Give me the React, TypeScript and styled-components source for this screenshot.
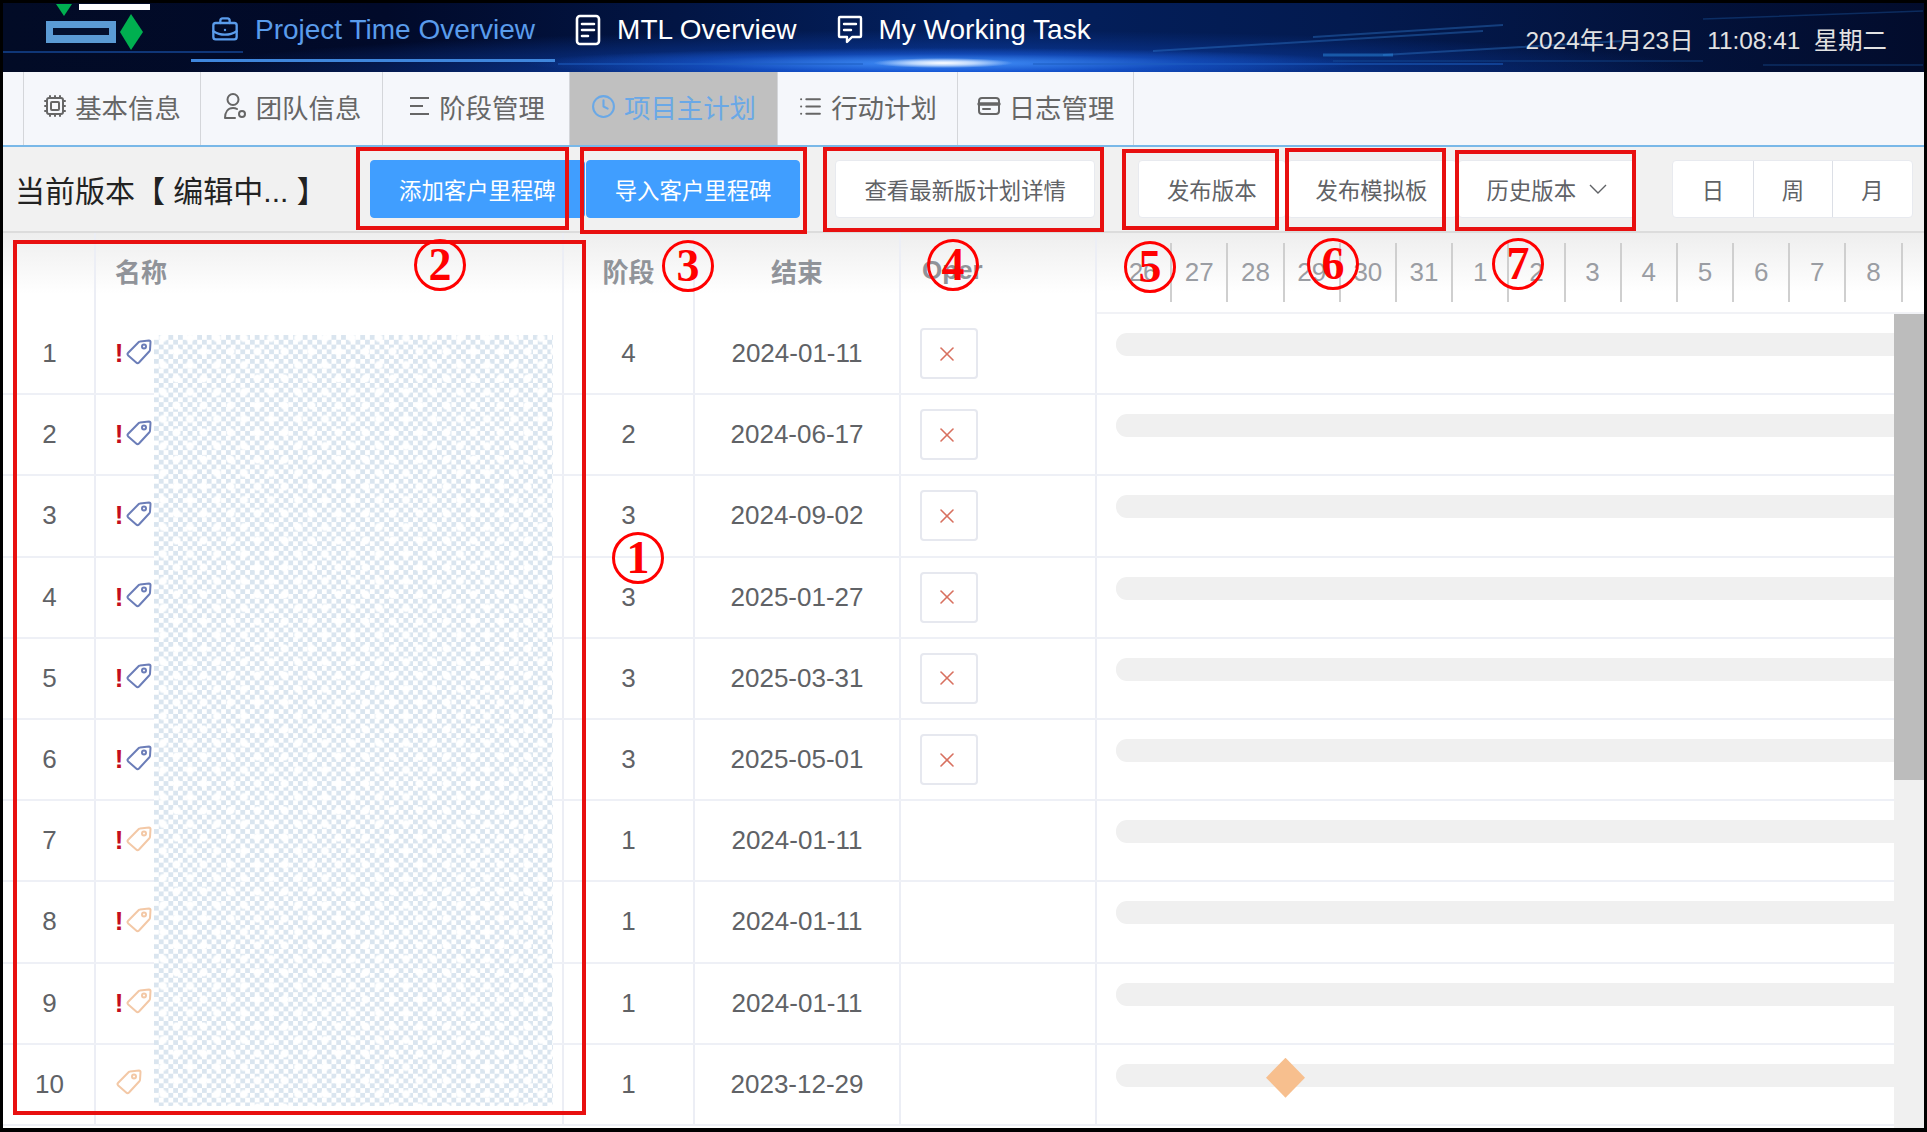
import React from "react";
import styled, {createGlobalStyle} from "styled-components";
import {BriefcaseBusiness, Clock, Cpu, List, X} from "lucide-react";

const GlobalStyle = createGlobalStyle`
  html, body {
    margin: 0;
    padding: 0;
    background: #fff;
  }
  * {
    box-sizing: border-box;
  }
`

const Frame = styled.div`
  position: relative;
  width: 1927px;
  height: 1132px;
  border: 3px solid #000;
  border-bottom-width: 4px;
  overflow: hidden;
  display: flex;
  flex-direction: column;
  background: #fff;
  font-family: "Liberation Sans", "Noto Sans CJK SC", sans-serif;
`

const Header = styled.header`
  position: relative;
  flex: 0 0 69px;
  display: flex;
  align-items: stretch;
  background:
    radial-gradient(ellipse 70px 5px at 940px 60px, #ffffff 0%, rgba(220, 235, 255, .8) 45%, rgba(90, 160, 255, 0) 100%),
    radial-gradient(ellipse 420px 15px at 940px 60px, rgba(70, 150, 255, .95) 0%, rgba(30, 100, 230, .4) 60%, rgba(20, 70, 200, 0) 100%),
    radial-gradient(ellipse 760px 42px at 940px 69px, rgba(16, 80, 210, .95) 0%, rgba(10, 55, 150, .55) 60%, rgba(8, 40, 110, 0) 100%),
    linear-gradient(90deg, #020b26 0%, #010a2a 20%, #03205e 50%, #031a4f 70%, #020c2c 100%);
`

const Streaks = styled.svg`
  position: absolute;
  inset: 0;
  width: 100%;
  height: 100%;
`

const Logo = styled.svg`
  position: relative;
  flex: 0 0 188px;
  height: 69px;
`

const NavItem = styled.div<{$active?: boolean}>`
  position: relative;
  display: flex;
  align-items: center;
  gap: 16px;
  height: 59px;
  padding: 0 20px 2px 20px;
  font-size: 28px;
  color: ${p => p.$active ? "#5a9cec" : "#fff"};
  border-bottom: 3px solid ${p => p.$active ? "#3f86dc" : "transparent"};
  white-space: pre;
`

const DateText = styled.div`
  position: relative;
  margin-left: auto;
  padding: 18px 37px 0 0;
  font-size: 24.4px;
  color: #e2e2e2;
  white-space: pre;
`

const Tabs = styled.nav`
  flex: 0 0 75px;
  display: flex;
  padding-left: 20px;
  background: #f5f7fb;
  border-bottom: 2px solid #79b8e8;
`

const Tab = styled.div<{$active?: boolean; $w: number}>`
  flex: 0 0 ${p => p.$w}px;
  display: flex;
  align-items: center;
  justify-content: center;
  gap: 8px;
  padding-bottom: 5px;
  font-size: 26.4px;
  color: ${p => p.$active ? "#6aa8e6" : "#666"};
  background: ${p => p.$active ? "#c0c0c0" : "transparent"};
  border-left: 1px solid #d4d6da;
  &:last-child {
    border-right: 1px solid #d4d6da;
  }
`

const Toolbar = styled.div`
  flex: 0 0 86px;
  display: flex;
  align-items: center;
  background: #f1f1f1;
  border-bottom: 2px solid #dcdcdc;
`

const Title = styled.div`
  flex: 0 0 367px;
  padding-left: 12px;
  font-size: 30px;
  color: #222;
  white-space: pre;
`

const ButtonGroup = styled.div`
  display: flex;
  gap: 1px;
`

const Button = styled.div<{$primary?: boolean; $left?: number}>`
  flex: none;
  display: flex;
  align-items: center;
  gap: 13px;
  height: 58px;
  margin-left: ${p => p.$left || 0}px;
  padding: 0 28px;
  font-size: 22.4px;
  white-space: nowrap;
  border-radius: 4px;
  color: ${p => p.$primary ? "#fff" : "#606266"};
  background: ${p => p.$primary ? "#409eff" : "#fff"};
  border: 1px solid ${p => p.$primary ? "#409eff" : "#e8eaef"};
`

const Segments = styled.div`
  flex: none;
  display: flex;
  margin-left: 36px;
  height: 58px;
  background: #fff;
  border: 1px solid #e8eaef;
  border-radius: 4px;
`

const Segment = styled.div`
  width: 79.6px;
  display: flex;
  align-items: center;
  justify-content: center;
  font-size: 22.4px;
  color: #606266;
  & + & {
    border-left: 1px solid #dcdfe6;
  }
`

const Content = styled.div`
  position: relative;
  flex: 1;
  display: flex;
  min-height: 0;
`

const Table = styled.div`
  flex: 0 0 1094px;
  display: flex;
  flex-direction: column;
`

const HeadRow = styled.div`
  flex: 0 0 81px;
  display: grid;
  grid-template-columns: 93px 468px 131px 206px 196px;
  background: linear-gradient(#eeeeee, #ffffff 75%);
`

const HeadCell = styled.div<{$align?: string; $pad?: number}>`
  display: flex;
  align-items: center;
  justify-content: ${p => p.$align || "center"};
  padding: 0 0 6px ${p => p.$pad || 0}px;
  font-size: 26px;
  font-weight: bold;
  color: #909399;
  border-right: 2px solid #eceef5;
`

const Row = styled.div`
  flex: 0 0 81.2px;
  display: grid;
  grid-template-columns: 93px 468px 131px 206px 196px;
  border-bottom: 2px solid #eef0f6;
`

const Cell = styled.div<{$align?: string; $pad?: number}>`
  display: flex;
  align-items: center;
  justify-content: ${p => p.$align || "center"};
  padding-left: ${p => p.$pad || 0}px;
  font-size: 26px;
  color: #606266;
  border-right: 2px solid #eceef5;
`

const Bang = styled.span`
  width: 12px;
  font-size: 26px;
  font-weight: bold;
  color: #c40d1e;
  text-align: center;
`

const Tag = styled.svg<{$bang: boolean}>`
  width: 26px;
  height: 26px;
  margin-left: ${p => p.$bang ? 1 : 3}px;
  margin-top: -4px;
`

const DeleteButton = styled.div`
  width: 58px;
  height: 51px;
  display: flex;
  align-items: center;
  justify-content: center;
  padding-right: 4px;
  border: 2px solid #e6e8ef;
  border-radius: 4px;
  color: #d8705f;
`

const Mask = styled.div`
  position: absolute;
  left: 151px;
  top: 102px;
  width: 399px;
  height: 771px;
  background:
    radial-gradient(circle, #fff 3px, transparent 5px) -4.5px -10.5px / 27px 27px,
    radial-gradient(circle, #fff 3px, transparent 5px) 9px 3px / 27px 27px,
    repeating-conic-gradient(#dae5ef 0 25%, #fff 0 50%) 0 0 / 9.6px 9.6px;
`

const Gantt = styled.div`
  flex: 1;
  display: flex;
  flex-direction: column;
  min-width: 0;
`

const GanttHead = styled.div`
  flex: 0 0 81px;
  display: flex;
  padding: 10px 0 10px 19px;
  background: linear-gradient(#eeeeee, #ffffff 75%);
  border-bottom: 2px solid #f1f2f6;
`

const Day = styled.div`
  flex: 0 0 56.2px;
  display: flex;
  align-items: center;
  justify-content: center;
  font-size: 26px;
  color: #9a9da3;
  border-right: 2px solid #cfcfcf;
`

const GanttBody = styled.div`
  flex: 1;
  display: flex;
  min-height: 0;
`

const GanttRows = styled.div`
  flex: 1;
  display: flex;
  flex-direction: column;
`

const GanttRow = styled.div`
  flex: 0 0 81.2px;
  padding: 19px 0 0 19px;
  border-bottom: 2px solid #eef0f6;
`

const GanttBar = styled.div`
  position: relative;
  height: 23px;
  background: #f0f0f0;
  border-radius: 11px 0 0 11px;
`

const Milestone = styled.div`
  position: absolute;
  left: 150px;
  top: -6px;
  width: 39px;
  height: 40px;
  background: #f7bf8e;
  clip-path: polygon(50% 0, 100% 50%, 50% 100%, 0 50%);
`

const Scrollbar = styled.div`
  flex: 0 0 30px;
  background: #f0f0f0;
`

const Thumb = styled.div`
  height: 466px;
  background: #bcbcbc;
`

const Callout = styled.div<{$x: number; $y: number; $w: number; $h: number}>`
  position: absolute;
  left: ${p => p.$x - 3}px;
  top: ${p => p.$y - 3}px;
  width: ${p => p.$w}px;
  height: ${p => p.$h}px;
  border: 4px solid #e81010;
`

const Badge = styled.div<{$x: number; $y: number}>`
  position: absolute;
  left: ${p => p.$x - 29}px;
  top: ${p => p.$y - 29}px;
  width: 52px;
  height: 52px;
  display: flex;
  align-items: center;
  justify-content: center;
  border: 3px solid #f00;
  border-radius: 50%;
  font-family: "Liberation Serif", serif;
  font-size: 46px;
  font-weight: bold;
  line-height: 1;
  color: #f00;
`

const strokeIcon = {fill: "none", stroke: "currentColor", strokeWidth: 2, strokeLinecap: "round" as const, strokeLinejoin: "round" as const}

const DocIcon = () => (
    <svg width="26" height="34" viewBox="0 0 26 34" {...strokeIcon} strokeWidth={2.6}>
        <rect x="2" y="3" width="22" height="28" rx="3"/>
        <path d="M7 11h12M7 17h12M7 23h6"/>
    </svg>
)

const ChatIcon = () => (
    <svg width="26" height="34" viewBox="0 0 26 34" {...strokeIcon} strokeWidth={2.4}>
        <path d="M3 4h20a1 1 0 0 1 1 1v18a1 1 0 0 1-1 1h-8l-5 5v-5H3a1 1 0 0 1-1-1V5a1 1 0 0 1 1-1z"/>
        <path d="M7 11h12M7 17h7"/>
    </svg>
)

const TeamIcon = () => (
    <svg width="26" height="28" viewBox="0 0 26 28" {...strokeIcon}>
        <circle cx="11" cy="7.5" r="5.5"/>
        <path d="M3 26c0-6 3-10 8-10 2 0 3 .4 4 1M3 26h10"/>
        <circle cx="20" cy="22" r="3"/>
    </svg>
)

const StagesIcon = () => (
    <svg width="24" height="26" viewBox="0 0 24 26" {...strokeIcon} strokeLinecap="butt">
        <path d="M3 5h19M3 13h13M3 21h19"/>
    </svg>
)

const CardIcon = () => (
    <svg width="24" height="22" viewBox="0 0 24 22" {...strokeIcon}>
        <rect x="2" y="3" width="20" height="16" rx="3"/>
        <path d="M2 9h20" strokeWidth={3.4}/>
        <path d="M6 14h7"/>
    </svg>
)

const ChevronIcon = () => (
    <svg width="18" height="11" viewBox="0 0 18 11" fill="none" stroke="currentColor" strokeWidth={1.4}>
        <path d="M1 1l8 8 8-8"/>
    </svg>
)

const TagIcon: React.FC<{color: string; bang: boolean}> = ({color, bang}) => (
    <Tag $bang={bang} viewBox="0 0 26 26" fill="none" stroke={color} strokeWidth={2} strokeLinejoin="round">
        <path d="M14 2.5 L23 1.5 a1.5 1.5 0 0 1 1.5 1.5 L24 11 a2 2 0 0 1-.6 1.2 L13 23.5 a2 2 0 0 1-2.8 0 L2.2 16.5 a2 2 0 0 1 0-2.8 L12.8 3 a2 2 0 0 1 1.2-.5z"/>
        <circle cx="18" cy="7.5" r="2"/>
    </Tag>
)

const BLUE_TAG = "#6b7db8"
const ORANGE_TAG = "#f3c8a6"

const rows = [
    {no: 1, bang: true, tag: BLUE_TAG, stage: 4, end: "2024-01-11", del: true},
    {no: 2, bang: true, tag: BLUE_TAG, stage: 2, end: "2024-06-17", del: true},
    {no: 3, bang: true, tag: BLUE_TAG, stage: 3, end: "2024-09-02", del: true},
    {no: 4, bang: true, tag: BLUE_TAG, stage: 3, end: "2025-01-27", del: true},
    {no: 5, bang: true, tag: BLUE_TAG, stage: 3, end: "2025-03-31", del: true},
    {no: 6, bang: true, tag: BLUE_TAG, stage: 3, end: "2025-05-01", del: true},
    {no: 7, bang: true, tag: ORANGE_TAG, stage: 1, end: "2024-01-11", del: false},
    {no: 8, bang: true, tag: ORANGE_TAG, stage: 1, end: "2024-01-11", del: false},
    {no: 9, bang: true, tag: ORANGE_TAG, stage: 1, end: "2024-01-11", del: false},
    {no: 10, bang: false, tag: ORANGE_TAG, stage: 1, end: "2023-12-29", del: false},
]

const days = [26, 27, 28, 29, 30, 31, 1, 2, 3, 4, 5, 6, 7, 8]

const callouts = [
    {x: 13, y: 240, w: 573, h: 875},
    {x: 356, y: 147, w: 213, h: 83},
    {x: 580, y: 147, w: 227, h: 87},
    {x: 823, y: 147, w: 281, h: 85},
    {x: 1122, y: 149, w: 157, h: 81},
    {x: 1285, y: 148, w: 161, h: 83},
    {x: 1455, y: 150, w: 181, h: 81},
]

const badges = [
    {label: "1", x: 638, y: 558},
    {label: "2", x: 440, y: 265},
    {label: "3", x: 688, y: 266},
    {label: "4", x: 953, y: 265},
    {label: "5", x: 1150, y: 267},
    {label: "6", x: 1333, y: 264},
    {label: "7", x: 1518, y: 264},
]

export default function App() {
    return (
        <Frame>
            <GlobalStyle/>
            <Header>
                <Streaks viewBox="0 0 1921 69" fill="none">
                    <path d="M0 49H240M555 61H860M1030 61H1500" stroke="#1c5cc0" strokeWidth="1.5" opacity=".7"/>
                    <path d="M1150 48L1480 28M1310 34L1500 22M1380 52L1620 38" stroke="#2f7ad0" strokeWidth="2" opacity=".4"/>
                    <path d="M1330 58H1700M1700 16L1920 8M1760 62H1920" stroke="#1c5aa8" strokeWidth="1.5" opacity=".4"/>
                    <path d="M1320 52h70" stroke="#2a8ae0" strokeWidth="3" opacity=".5"/>
                </Streaks>
                <Logo viewBox="0 0 188 69">
                    <polygon points="53,1 69,1 61,13" fill="#00b050"/>
                    <rect x="76" y="1" width="71" height="6" fill="#fff"/>
                    <rect x="43" y="18" width="70" height="22" fill="#5b9bd5"/>
                    <rect x="50" y="25" width="56" height="7" fill="#04102e"/>
                    <polygon points="128,11 140,29 128,47 117,29" fill="#00b050"/>
                </Logo>
                <NavItem $active>
                    <BriefcaseBusiness size={28} strokeWidth={2}/>
                    Project Time Overview
                </NavItem>
                <NavItem>
                    <DocIcon/>
                    MTL Overview
                </NavItem>
                <NavItem>
                    <ChatIcon/>
                    My Working Task
                </NavItem>
                <DateText>2024年1月23日  11:08:41  星期二</DateText>
            </Header>
            <Tabs>
                <Tab $w={177}><Cpu size={24} strokeWidth={2}/>基本信息</Tab>
                <Tab $w={182}><TeamIcon/>团队信息</Tab>
                <Tab $w={187}><StagesIcon/>阶段管理</Tab>
                <Tab $w={208} $active><Clock size={25} strokeWidth={2}/>项目主计划</Tab>
                <Tab $w={180}><List size={25} strokeWidth={2}/>行动计划</Tab>
                <Tab $w={177}><CardIcon/>日志管理</Tab>
            </Tabs>
            <Toolbar>
                <Title>当前版本【 编辑中... 】</Title>
                <ButtonGroup>
                    <Button $primary>添加客户里程碑</Button>
                    <Button $primary>导入客户里程碑</Button>
                </ButtonGroup>
                <Button $left={35}>查看最新版计划详情</Button>
                <Button $left={43}>发布版本</Button>
                <Button $left={1}>发布模拟板</Button>
                <Button $left={1}>历史版本<ChevronIcon/></Button>
                <Segments>
                    <Segment>日</Segment>
                    <Segment>周</Segment>
                    <Segment>月</Segment>
                </Segments>
            </Toolbar>
            <Content>
                <Table>
                    <HeadRow>
                        <HeadCell/>
                        <HeadCell $align="flex-start" $pad={19}>名称</HeadCell>
                        <HeadCell>阶段</HeadCell>
                        <HeadCell>结束</HeadCell>
                        <HeadCell $align="flex-start" $pad={21}>Oper</HeadCell>
                    </HeadRow>
                    {rows.map(row => (
                        <Row key={row.no}>
                            <Cell $pad={2}>{row.no}</Cell>
                            <Cell $align="flex-start" $pad={17}>
                                {row.bang && <Bang>!</Bang>}
                                <TagIcon color={row.tag} bang={row.bang}/>
                            </Cell>
                            <Cell>{row.stage}</Cell>
                            <Cell>{row.end}</Cell>
                            <Cell $align="flex-start" $pad={19}>
                                {row.del && <DeleteButton><X size={24} strokeWidth={1.6}/></DeleteButton>}
                            </Cell>
                        </Row>
                    ))}
                    <Mask/>
                </Table>
                <Gantt>
                    <GanttHead>
                        {days.map((day, i) => <Day key={i}>{day}</Day>)}
                    </GanttHead>
                    <GanttBody>
                        <GanttRows>
                            {rows.map(row => (
                                <GanttRow key={row.no}>
                                    <GanttBar>
                                        {row.no === 10 && <Milestone/>}
                                    </GanttBar>
                                </GanttRow>
                            ))}
                        </GanttRows>
                        <Scrollbar><Thumb/></Scrollbar>
                    </GanttBody>
                </Gantt>
            </Content>
            {callouts.map((c, i) => <Callout key={i} $x={c.x} $y={c.y} $w={c.w} $h={c.h}/>)}
            {badges.map(b => <Badge key={b.label} $x={b.x} $y={b.y}>{b.label}</Badge>)}
        </Frame>
    )
}
